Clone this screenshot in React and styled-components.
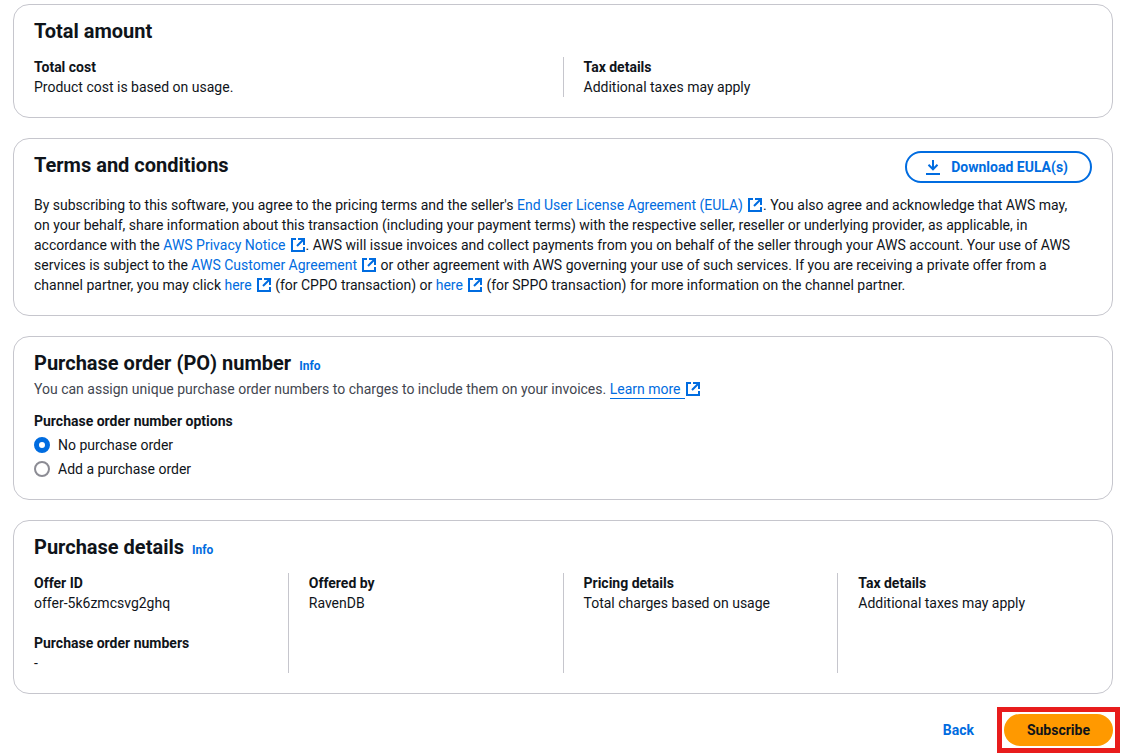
import { useState } from "react";
import styled, { createGlobalStyle } from "styled-components";

const GlobalStyle = createGlobalStyle`
  * {
    box-sizing: border-box;
  }
  body {
    margin: 0;
    background-color: #fff;
    color: #0f141a;
    font-family: Roboto, "Noto Sans", sans-serif;
    font-size: 14px;
    line-height: 20px;
  }
`;

const Page = styled.main`
  display: flex;
  flex-direction: column;
  gap: 20px;
  padding: 4px 23px 10px 13px;
`;

const Card = styled.section`
  display: flex;
  flex-direction: column;
  gap: 12px;
  padding: 12px 20px 20px;
  border: 1px solid #c6c6cd;
  border-radius: 16px;
`;

const CardHeader = styled.header`
  display: flex;
  justify-content: space-between;
  align-items: flex-start;
`;

const TitleRow = styled.div`
  display: flex;
  align-items: baseline;
  gap: 8px;
`;

const Title = styled.h2`
  margin: 0;
  font-size: 20px;
  line-height: 28px;
  font-weight: 700;
`;

const InfoLink = styled.a`
  color: #006ce0;
  font-size: 12px;
  font-weight: 700;
  text-decoration: none;
`;

const Text = styled.p`
  margin: 0;
  padding-right: 12px;
`;

const Description = styled.p`
  margin: 2px 0 0;
  color: #424650;
`;

const TextLink = styled.a`
  color: #006ce0;
  text-decoration: none;
  span {
    padding: 0 4px 1px 0;
    border-bottom: ${({ $underlined }) =>
      $underlined ? "1px solid #006ce0" : "none"};
  }
  svg {
    vertical-align: -3px;
  }
`;

const Columns = styled.div`
  display: grid;
  grid-template-columns: repeat(${({ $count }) => $count}, 1fr);
  gap: 20px;
  margin-left: -21px;
`;

const Column = styled.dl`
  display: flex;
  flex-direction: column;
  gap: 20px;
  margin: 0;
  padding-left: 20px;
  border-left: 1px solid #c6c6cd;
  &:first-child {
    border-color: transparent;
  }
`;

const Term = styled.dt`
  font-weight: 700;
`;

const Value = styled.dd`
  margin: 0;
`;

const Options = styled.fieldset`
  display: flex;
  flex-direction: column;
  gap: 4px;
  margin: 0;
  padding: 0;
  border: 0;
`;

const Legend = styled.legend`
  margin-bottom: 4px;
  padding: 0;
  font-weight: 700;
`;

const Option = styled.label`
  display: flex;
  align-items: center;
  gap: 8px;
  cursor: pointer;
`;

const Radio = styled.input`
  appearance: none;
  width: 16px;
  height: 16px;
  margin: 0;
  border: 2px solid #8c8c94;
  border-radius: 50%;
  background-color: #fff;
  cursor: pointer;
  &:checked {
    border: 5px solid #006ce0;
  }
`;

const OutlineButton = styled.button`
  display: flex;
  align-items: center;
  gap: 10px;
  height: 32px;
  padding: 0 22px 0 18px;
  border: 2px solid #006ce0;
  border-radius: 20px;
  background-color: #fff;
  color: #006ce0;
  font: inherit;
  font-weight: 700;
  cursor: pointer;
`;

const Footer = styled.footer`
  display: flex;
  justify-content: flex-end;
  align-items: center;
  gap: 8px;
`;

const BackButton = styled.button`
  height: 32px;
  padding: 0 22px;
  border: 0;
  background-color: transparent;
  color: #006ce0;
  font: inherit;
  font-weight: 700;
  cursor: pointer;
`;

const Highlight = styled.div`
  outline: 5px solid #e81c1c;
  outline-offset: 2px;
`;

const SubscribeButton = styled.button`
  display: block;
  height: 32px;
  padding: 0 23px;
  border: 0;
  border-radius: 20px;
  background-color: #ff9900;
  color: #0f141a;
  font: inherit;
  font-weight: 700;
  cursor: pointer;
`;

const ExternalIcon = () => (
  <svg width="16" height="16" viewBox="0 0 16 16" fill="none" stroke="currentColor" strokeWidth="2" aria-hidden="true">
    <path d="M14 10v4H2V2h4" />
    <path d="M8 2h6v6M14 2 7 9" />
  </svg>
);

const DownloadIcon = () => (
  <svg width="16" height="16" viewBox="0 0 16 16" fill="none" stroke="currentColor" strokeWidth="2" aria-hidden="true">
    <path d="M1 15h14M8 1v9.5M3.5 5.8 8 10.3l4.5-4.5" />
  </svg>
);

const External = ({ children, underlined }) => (
  <TextLink href="#" $underlined={underlined}>
    <span>{children}</span>
    <ExternalIcon />
  </TextLink>
);

const Detail = ({ term, value }) => (
  <div>
    <Term>{term}</Term>
    <Value>{value}</Value>
  </div>
);

export default function App() {
  const [po, setPo] = useState("none");

  return (
    <>
      <GlobalStyle />
      <Page>
        <Card>
          <Title>Total amount</Title>
          <Columns $count={2}>
            <Column>
              <Detail term="Total cost" value="Product cost is based on usage." />
            </Column>
            <Column>
              <Detail term="Tax details" value="Additional taxes may apply" />
            </Column>
          </Columns>
        </Card>

        <Card>
          <CardHeader>
            <Title>Terms and conditions</Title>
            <OutlineButton type="button">
              <DownloadIcon />
              Download EULA(s)
            </OutlineButton>
          </CardHeader>
          <Text>
            By subscribing to this software, you agree to the pricing terms and
            the seller's{" "}
            <External>End User License Agreement (EULA)</External>. You also
            agree and acknowledge that AWS may, on your behalf, share
            information about this transaction (including your payment terms)
            with the respective seller, reseller or underlying provider, as
            applicable, in accordance with the{" "}
            <External>AWS Privacy Notice</External>. AWS will issue invoices and
            collect payments from you on behalf of the seller through your AWS
            account. Your use of AWS services is subject to the{" "}
            <External>AWS Customer Agreement</External> or other agreement with
            AWS governing your use of such services. If you are receiving a
            private offer from a channel partner, you may click{" "}
            <External>here</External> (for CPPO transaction) or{" "}
            <External>here</External> (for SPPO transaction) for more
            information on the channel partner.
          </Text>
        </Card>

        <Card>
          <div>
            <TitleRow>
              <Title>Purchase order (PO) number</Title>
              <InfoLink href="#">Info</InfoLink>
            </TitleRow>
            <Description>
              You can assign unique purchase order numbers to charges to include
              them on your invoices. <External underlined>Learn more</External>
            </Description>
          </div>
          <Options>
            <Legend>Purchase order number options</Legend>
            <Option>
              <Radio type="radio" name="po" checked={po === "none"} onChange={() => setPo("none")} />
              No purchase order
            </Option>
            <Option>
              <Radio type="radio" name="po" checked={po === "add"} onChange={() => setPo("add")} />
              Add a purchase order
            </Option>
          </Options>
        </Card>

        <Card>
          <TitleRow>
            <Title>Purchase details</Title>
            <InfoLink href="#">Info</InfoLink>
          </TitleRow>
          <Columns $count={4}>
            <Column>
              <Detail term="Offer ID" value="offer-5k6zmcsvg2ghq" />
              <Detail term="Purchase order numbers" value="-" />
            </Column>
            <Column>
              <Detail term="Offered by" value="RavenDB" />
            </Column>
            <Column>
              <Detail term="Pricing details" value="Total charges based on usage" />
            </Column>
            <Column>
              <Detail term="Tax details" value="Additional taxes may apply" />
            </Column>
          </Columns>
        </Card>

        <Footer>
          <BackButton type="button">Back</BackButton>
          <Highlight>
            <SubscribeButton type="button">Subscribe</SubscribeButton>
          </Highlight>
        </Footer>
      </Page>
    </>
  );
}
